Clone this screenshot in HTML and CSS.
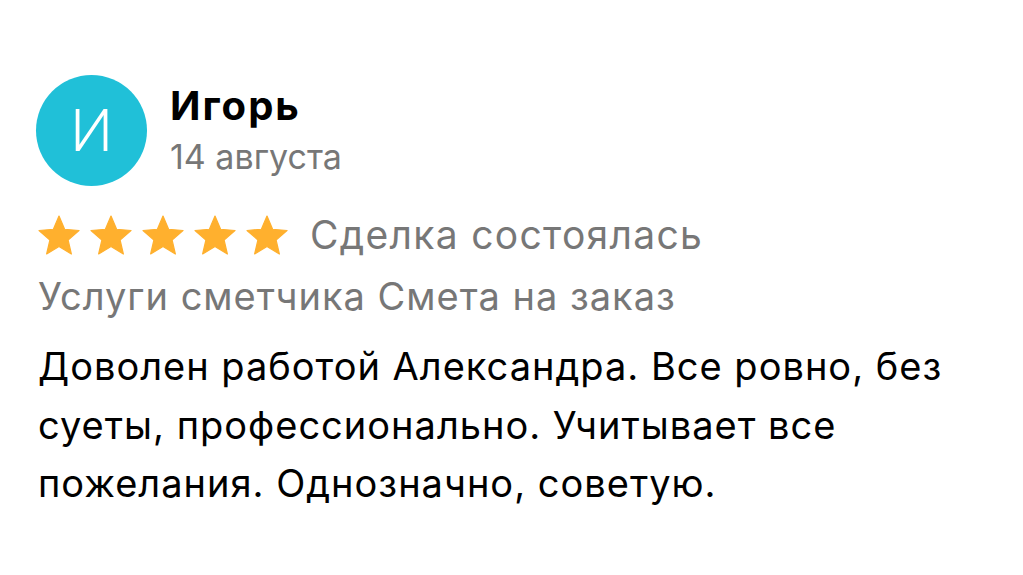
FILE: index.html
```html
<!DOCTYPE html>
<html lang="ru">
<head>
<meta charset="utf-8">
<title>Отзыв</title>
<link rel="stylesheet" href="styles.css">
</head>
<body>
<div class="review">
  <div class="header">
    <div class="avatar">И</div>
    <div class="meta">
      <div class="name">Игорь</div>
      <div class="date">14 августа</div>
    </div>
  </div>
  <div class="rating">
    <div class="stars">
      <svg class="star" viewBox="1.5 1.5 21 20"><path d="M12 17.27L18.18 21l-1.64-7.03L22 9.24l-7.19-.61L12 2 9.19 8.63 2 9.24l5.46 4.73L5.82 21z"/></svg>
      <svg class="star" viewBox="1.5 1.5 21 20"><path d="M12 17.27L18.18 21l-1.64-7.03L22 9.24l-7.19-.61L12 2 9.19 8.63 2 9.24l5.46 4.73L5.82 21z"/></svg>
      <svg class="star" viewBox="1.5 1.5 21 20"><path d="M12 17.27L18.18 21l-1.64-7.03L22 9.24l-7.19-.61L12 2 9.19 8.63 2 9.24l5.46 4.73L5.82 21z"/></svg>
      <svg class="star" viewBox="1.5 1.5 21 20"><path d="M12 17.27L18.18 21l-1.64-7.03L22 9.24l-7.19-.61L12 2 9.19 8.63 2 9.24l5.46 4.73L5.82 21z"/></svg>
      <svg class="star" viewBox="1.5 1.5 21 20"><path d="M12 17.27L18.18 21l-1.64-7.03L22 9.24l-7.19-.61L12 2 9.19 8.63 2 9.24l5.46 4.73L5.82 21z"/></svg>
    </div>
    <div class="status">Сделка состоялась</div>
  </div>
  <div class="service">Услуги сметчика Смета на заказ</div>
  <p class="text">Доволен работой Александра. Все ровно, без суеты, профессионально. Учитывает все пожелания. Однозначно, советую.</p>
</div>
</body>
</html>
```
FILE: styles.css
```css
html, body {
  margin: 0;
  padding: 0;
  background: #ffffff;
}

body {
  font-family: Inter, Roboto, "Noto Sans", "Liberation Sans", sans-serif;
  color: #000000;
}

.review {
  padding: 75px 0 0 36px;
  width: 980px;
}

.header {
  display: flex;
  align-items: center;
  gap: 23px;
}

.avatar {
  width: 111px;
  height: 111px;
  border-radius: 50%;
  background: #20c0d8;
  color: #ffffff;
  font-family: Roboto, sans-serif;
  font-size: 60px;
  font-weight: 300;
  display: flex;
  align-items: center;
  justify-content: center;
  flex-shrink: 0;
}

.meta {
  display: flex;
  flex-direction: column;
  gap: 9px;
}

.name {
  font-size: 40px;
  font-weight: 700;
  line-height: 44px;
  letter-spacing: 2px;
}

.date {
  font-size: 34px;
  line-height: 40px;
  color: #777777;
}

.rating {
  display: flex;
  align-items: center;
  gap: 22px;
  margin-top: 27px;
}

.stars {
  display: flex;
  gap: 10px;
  padding-left: 2px;
}

.star {
  width: 42px;
  height: 40px;
  fill: #ffb02e;
  stroke: #ffb02e;
  stroke-width: 0.6;
  stroke-linejoin: round;
  display: block;
}

.status {
  font-size: 39px;
  line-height: 44px;
  letter-spacing: 1.3px;
  color: #777777;
}

.service {
  margin-top: 17px;
  padding-left: 2px;
  font-size: 38px;
  line-height: 44px;
  letter-spacing: 1px;
  color: #777777;
}

.text {
  margin: 19px 0 0;
  padding-left: 2px;
  font-size: 38px;
  line-height: 58.5px;
  letter-spacing: 1px;
  color: #000000;
}
```
